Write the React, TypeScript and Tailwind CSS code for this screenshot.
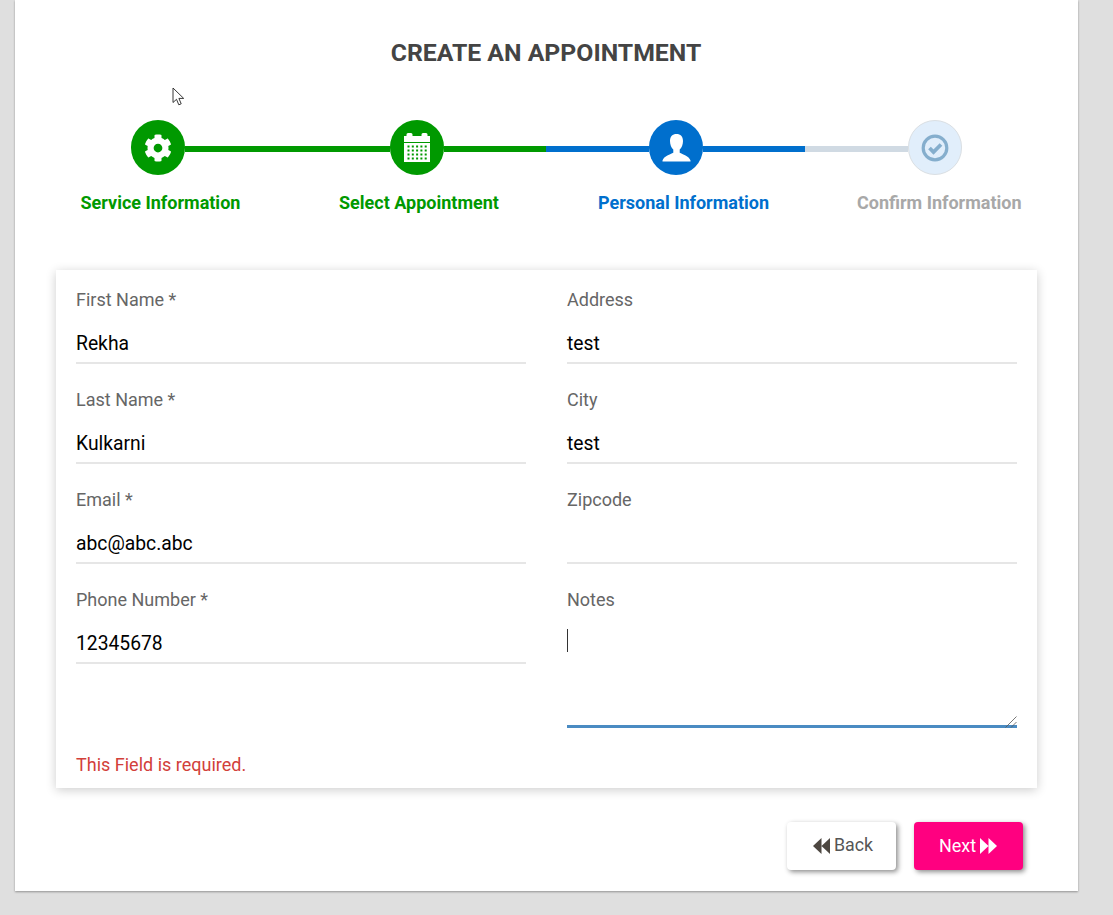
import { FaCog } from "react-icons/fa";

const leftFields = [
  { label: "First Name *", value: "Rekha" },
  { label: "Last Name *", value: "Kulkarni" },
  { label: "Email *", value: "abc@abc.abc" },
  { label: "Phone Number *", value: "12345678" },
];

const rightFields = [
  { label: "Address", value: "test" },
  { label: "City", value: "test" },
  { label: "Zipcode", value: "" },
];

function Field({ label, value }: { label: string; value: string }) {
  return (
    <div className="h-[100px]">
      <div className="h-[30px] text-[18px] leading-[30px] text-[#666]">{label}</div>
      <div className="mt-[7px] h-[42px] border-b-2 border-[#e6e6e6] text-[19.3px] leading-[44px] text-black">
        {value}
      </div>
    </div>
  );
}

function CalendarIcon() {
  const dots = [];
  for (let r = 0; r < 4; r++) {
    for (let c = 0; c < 5; c++) {
      dots.push(<rect key={`${r}-${c}`} x={3.5 + c * 4.3} y={12.5 + r * 4} width="2" height="2" fill="#009900" />);
    }
  }
  return (
    <svg width="26" height="29" viewBox="0 0 26 29">
      <path d="M0 9V3h2.500V1.500A1.500 1.500 0 0 1 4 0h3a1.500 1.500 0 0 1 1.500 1.500V3h9V1.500A1.500 1.500 0 0 1 19 0h3a1.500 1.500 0 0 1 1.500 1.500V3H26v6z" fill="#fff" />
      <rect x="0" y="10" width="26" height="19" fill="#fff" />
      {dots}
    </svg>
  );
}

function UserIcon() {
  return (
    <svg width="29" height="28" viewBox="0 0 28 28" fill="#fff">
      <path d="M14 0c-4 0-6.500 2.600-6.500 7 0 3.600 1.300 6.800 3.300 8.600v3.200C8 20.400 1.500 22 0 26.500V27.500h28V26.500c-1.500-4.500-8-6.100-10.800-7.700v-3.200c2-1.800 3.300-5 3.300-8.600C20.500 2.600 18 0 14 0z" />
    </svg>
  );
}

function CheckCircleIcon() {
  return (
    <svg width="28" height="28" viewBox="0 0 28 28" fill="none">
      <circle cx="14" cy="14" r="11.800" stroke="#85aecd" strokeWidth="3.200" />
      <path d="M8.500 14l4 4 7.500-7.500" stroke="#85aecd" strokeWidth="3.800" />
    </svg>
  );
}

function Circle({ className, children }: { className: string; children: React.ReactNode }) {
  return (
    <div className={`flex h-[55px] w-[54px] shrink-0 items-center justify-center rounded-full ${className}`}>
      {children}
    </div>
  );
}

export default function App() {
  return (
    <div className="min-h-[915px] bg-[#dfdfdf] pl-[15px] pr-[35px] pb-[24px] font-['Roboto',sans-serif]">
      <div className="relative h-[891px] bg-white pt-[38px] shadow-[0_1px_2px_rgba(0,0,0,0.35)]">
        <h1 className="pr-[1px] text-center text-[24.8px] leading-[30px] font-bold text-[#444]">
          CREATE AN APPOINTMENT
        </h1>

        {/* mouse pointer from the capture */}
        <svg className="absolute top-[87px] left-[157px]" width="14" height="20" viewBox="0 0 14 20">
          <path d="M1 1v14.500l3.500-3.200 2.300 5.500 2.400-1-2.300-5.400h4.800z" fill="#fff" stroke="#222" strokeWidth="0.900" />
        </svg>

        {/* stepper */}
        <div className="mt-[52px] flex items-center pl-[116px]">
          <Circle className="bg-[#009900]">
            <FaCog className="text-[28px] text-white" />
          </Circle>
          <div className="mt-[3px] h-[6px] w-[205px] bg-[#009900]" />
          <Circle className="bg-[#009900]">
            <CalendarIcon />
          </Circle>
          <div className="mt-[3px] h-[6px] w-[102px] bg-[#009900]" />
          <div className="mt-[3px] h-[6px] w-[103px] bg-[#006fcd]" />
          <Circle className="bg-[#006fcd]">
            <UserIcon />
          </Circle>
          <div className="mt-[3px] h-[6px] w-[102px] bg-[#006fcd]" />
          <div className="mt-[3px] h-[6px] w-[103px] bg-[#d0dae3]" />
          <Circle className="border border-[#dadfe3] bg-[#e1eefb]">
            <CheckCircleIcon />
          </Circle>
        </div>
        <div className="mt-[16px] flex h-[24px] pl-[65.5px] text-[18px] leading-[24px] font-bold whitespace-nowrap">
          <div className="w-[258.5px] text-[#009900]">Service Information</div>
          <div className="w-[259px] text-[#009900]">Select Appointment</div>
          <div className="w-[259px] text-[#006fcd]">Personal Information</div>
          <div className="text-[#a8a8a8]">Confirm Information</div>
        </div>

        {/* form */}
        <div className="mt-[55px] ml-[41px] h-[518px] w-[981px] bg-white px-[20px] pt-[15px] shadow-[0_2px_10px_rgba(0,0,0,0.2)]">
          <div className="flex gap-[41px]">
            <div className="w-[450px]">
              {leftFields.map((f) => (
                <Field key={f.label} label={f.label} value={f.value} />
              ))}
            </div>
            <div className="w-[450px]">
              {rightFields.map((f) => (
                <Field key={f.label} label={f.label} value={f.value} />
              ))}
              <div className="h-[30px] text-[18px] leading-[30px] text-[#666]">Notes</div>
              <div className="relative mt-[9px]">
                <textarea
                  readOnly
                  className="block h-[104px] w-full resize-none border-b-[3px] border-[#4a8bc2] outline-none"
                />
                <div className="absolute top-[5px] left-0 h-[23px] w-px bg-[#333]" />
                <svg className="absolute right-0 bottom-0" width="12" height="12" viewBox="0 0 12 12" stroke="#555" strokeWidth="0.800">
                  <path d="M0.500 11.500L11.500 0.500M6 11.500L11.500 6" />
                </svg>
              </div>
            </div>
          </div>
          <div className="mt-[25px] text-[18px] leading-[24px] text-[#d2403a]">This Field is required.</div>
        </div>

        {/* actions */}
        <div className="mt-[34px] flex justify-end gap-[18px] pr-[55px]">
          <button className="flex h-[48px] w-[109px] items-center justify-center gap-[4px] rounded-[4px] bg-white pb-[1px] pl-[3px] text-[17.8px] text-[#555] shadow-[2px_2px_5px_rgba(0,0,0,0.45)]">
            <svg width="17" height="16" viewBox="0 0 17 16" fill="#4d4741">
              <path d="M8.500 0v16L0 8zM17 0v16L8.500 8z" />
            </svg>
            Back
          </button>
          <button className="flex h-[48px] w-[109px] items-center justify-center gap-[4px] rounded-[4px] bg-[#ff0080] pr-[1px] pb-[1px] text-[18px] text-white shadow-[2px_2px_5px_rgba(0,0,0,0.45)]">
            Next
            <svg width="17" height="16" viewBox="0 0 17 16" fill="#fff">
              <path d="M0 0v16l8.500-8zM8.500 0v16L17 8z" />
            </svg>
          </button>
        </div>
      </div>
    </div>
  );
}
